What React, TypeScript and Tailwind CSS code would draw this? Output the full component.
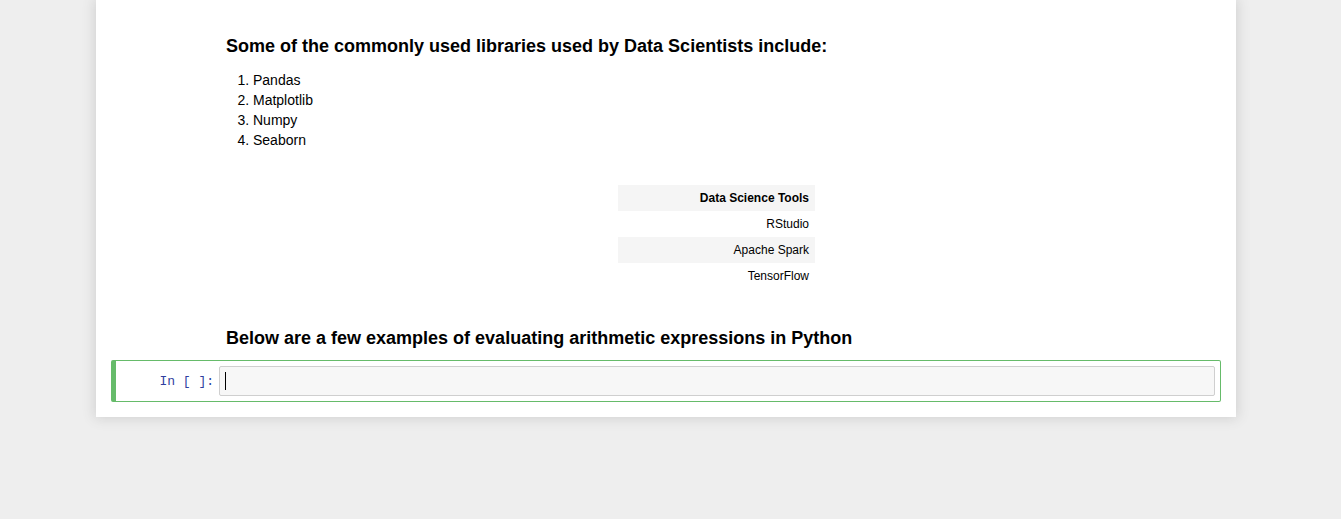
export default function App() {
    const libs = ["Pandas", "Matplotlib", "Numpy", "Seaborn"];
    const tools = ["RStudio", "Apache Spark", "TensorFlow"];

    return (
        <main className="min-h-[519px] bg-[#eeeeee] font-['Liberation_Sans',Arial,sans-serif] text-black">
            {/* Notebook container */}
            <div className="ml-[96px] w-[1140px] bg-white pt-[34px] pb-[15px] shadow-[0px_0px_12px_1px_rgba(87,87,87,0.2)]">
                {/* Markdown output */}
                <div className="pl-[130px] pr-[20px]">
                    <h4 className="text-[18px] leading-[24px] font-bold">
                        Some of the commonly used libraries used by Data Scientists include:
                    </h4>
                    <ol className="mt-[12px] list-decimal pl-[27px] text-[14px] leading-[20px]">
                        {libs.map((l) => (
                            <li key={l}>{l}</li>
                        ))}
                    </ol>

                    {/* Table */}
                    <div className="mt-[35px] flex justify-center pr-[9px]">
                        <table className="w-[197px] border-collapse text-[12px] text-right">
                            <thead>
                                <tr className="h-[26px] bg-[#f5f5f5]">
                                    <th className="px-[6px] font-bold">Data Science Tools</th>
                                </tr>
                            </thead>
                            <tbody>
                                {tools.map((t, i) => (
                                    <tr key={t} className={i % 2 === 1 ? "h-[26px] bg-[#f5f5f5]" : "h-[26px] bg-white"}>
                                        <td className="px-[6px]">{t}</td>
                                    </tr>
                                ))}
                            </tbody>
                        </table>
                    </div>

                    <h4 className="mt-[37px] text-[18px] leading-[24px] font-bold">
                        Below are a few examples of evaluating arithmetic expressions in Python
                    </h4>
                </div>

                {/* Selected code cell */}
                <div className="mt-[10px] ml-[15px] mr-[15px] flex h-[42px] items-center rounded-[2px] border border-l-[5px] border-[#66bb6a] pr-[5px]">
                    <div className="w-[103px] pr-[5px] pt-[2px] text-right font-['Liberation_Mono',monospace] text-[13px] text-[#303f9f]">
                        In [ ]:
                    </div>
                    <div className="flex h-[30px] flex-1 items-center rounded-[2px] border border-[#cfcfcf] bg-[#f7f7f7] pl-[5px]">
                        <div className="h-[18px] w-px bg-black" />
                    </div>
                </div>
            </div>
        </main>
    );
}
